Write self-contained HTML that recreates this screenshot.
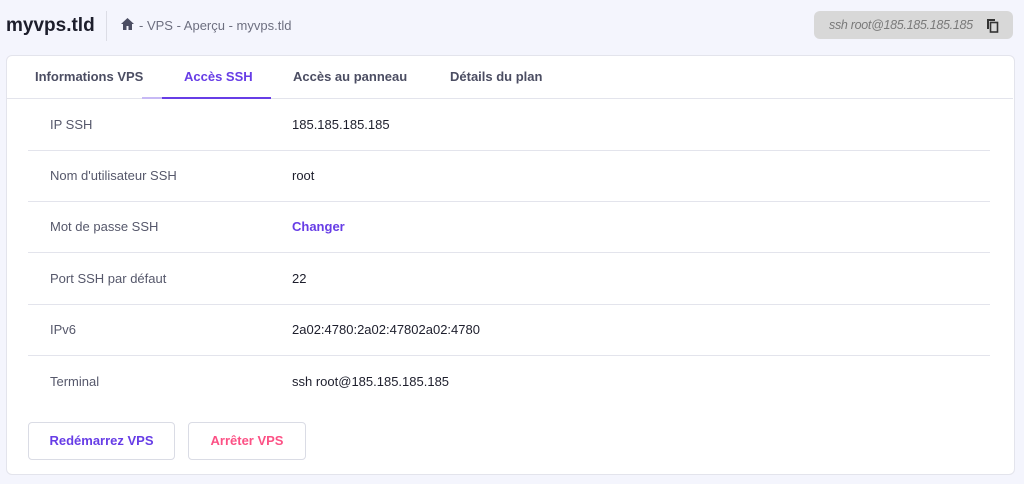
<!DOCTYPE html><html><head><style>
body{margin:0;width:1024px;height:484px;background:#f4f5fd;font-family:"Liberation Sans",sans-serif;position:relative;overflow:hidden}
.a{position:absolute}
.card{left:6px;top:55px;width:1007px;height:418px;background:#fff;border:1px solid #e3e4ec;border-radius:6px}
.tab{top:69px;font-size:13px;font-weight:bold;color:#4b4d62}
.row{left:28px;width:962px;height:51px;border-bottom:1px solid #e3e4ec}
.row .l{position:absolute;left:22px;top:18px;font-size:13px;color:#56586b}
.row .v{position:absolute;left:264px;top:18px;font-size:13px;color:#1d1e2c}
.btn{top:422px;height:36px;border:1px solid #dadce5;border-radius:4px;background:#fff;font-size:13px;font-weight:bold;text-align:center;line-height:36px}
</style></head><body>
<div class="a" style="left:6px;top:15px;font-size:19px;font-weight:bold;color:#1d1e2c">myvps.tld</div>
<div class="a" style="left:106px;top:11px;width:1px;height:30px;background:#dcdde6"></div>
<svg class="a" style="left:120px;top:17px" width="15" height="14" viewBox="0 0 15 14"><path d="M7.5 1L1 7h2v6h3.5V9h2v4H12V7h2z" fill="#4b4d62"/></svg>
<div class="a" style="left:139px;top:18px;font-size:13px;color:#6d6f80">- VPS - Aperçu - myvps.tld</div>
<div class="a" style="left:814px;top:11px;width:199px;height:28px;background:#d8d8d8;border-radius:6px"></div>
<div class="a" style="left:829px;top:18px;font-size:12.5px;font-style:italic;color:#7a7a7a;letter-spacing:-0.3px">ssh root@185.185.185.185</div>
<svg class="a" style="left:986px;top:18px" width="13" height="15" viewBox="0 0 13 15"><rect x="1" y="1" width="2" height="10" fill="#333"/><rect x="1" y="1" width="8" height="2" fill="#333"/><rect x="4.5" y="4.5" width="7" height="9.5" fill="none" stroke="#333" stroke-width="1.6"/></svg>
<div class="a card"></div>
<div class="a tab" style="left:35px">Informations VPS</div>
<div class="a tab" style="left:184px;color:#673de6">Accès SSH</div>
<div class="a tab" style="left:293px">Accès au panneau</div>
<div class="a tab" style="left:450px">Détails du plan</div>
<div class="a" style="left:7px;top:98px;width:1006px;height:1px;background:#e3e4ec"></div>
<div class="a" style="left:142px;top:97px;width:20px;height:2px;background:#c7b9f5"></div>
<div class="a" style="left:162px;top:97px;width:109px;height:2px;background:#673de6"></div>
<div class="a row" style="top:99px"><span class="l">IP SSH</span><span class="v">185.185.185.185</span></div>
<div class="a row" style="top:150px"><span class="l">Nom d'utilisateur SSH</span><span class="v">root</span></div>
<div class="a row" style="top:201px"><span class="l">Mot de passe SSH</span><span class="v" style="color:#673de6;font-weight:bold">Changer</span></div>
<div class="a row" style="top:253px"><span class="l">Port SSH par défaut</span><span class="v">22</span></div>
<div class="a row" style="top:304px"><span class="l">IPv6</span><span class="v">2a02:4780:2a02:47802a02:4780</span></div>
<div class="a row" style="top:356px;border:none"><span class="l">Terminal</span><span class="v">ssh root@185.185.185.185</span></div>
<div class="a btn" style="left:28px;width:145px;color:#673de6">Redémarrez VPS</div>
<div class="a btn" style="left:188px;width:116px;color:#fc5185">Arrêter VPS</div>
</body></html>
